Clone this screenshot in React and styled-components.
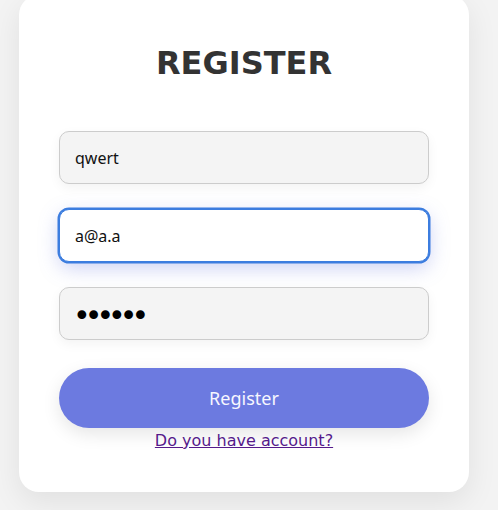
import React, { useEffect, useRef } from "react";
import styled, { createGlobalStyle, css } from "styled-components";

const Global = createGlobalStyle`
  html, body {
    margin: 0;
    padding: 0;
    background: #f3f3f3;
    font-family: "DejaVu Sans", sans-serif;
    overflow: hidden;
  }
  * { box-sizing: border-box; }
`;

const Page = styled.div`
  width: 498px;
  height: 510px;
  display: flex;
  align-items: flex-start;
  padding-left: 19px;
`;

const Card = styled.form`
  width: 450px;
  margin-top: -5px;
  background: #ffffff;
  border-radius: 20px;
  box-shadow: 0 10px 30px rgba(0, 0, 0, 0.08);
  padding: 49px 40px 42px;
  display: flex;
  flex-direction: column;
  align-items: stretch;
`;

const Title = styled.h2`
  margin: 0 0 49px;
  font-family: "DejaVu Sans", sans-serif;
  font-size: 32px;
  font-weight: bold;
  color: #333333;
  text-align: center;
  line-height: normal;
`;

const Fields = styled.div`
  display: flex;
  flex-direction: column;
  gap: 25px;
`;

const Input = styled.input`
  width: 100%;
  height: 53px;
  padding: 0 15px;
  font-family: "Noto Sans", sans-serif;
  font-size: 16px;
  color: #111;
  background: #f4f4f4;
  border: 1px solid #cccccc;
  border-radius: 10px;
  box-shadow: 0 4px 12px rgba(0, 0, 0, 0.05);
  outline: none;
  caret-color: #000;

  &[type="password"] {
    font-family: "DejaVu Sans", sans-serif;
    font-size: 30px;
    letter-spacing: -6px;
    padding: 3px 0 0 13px;
    color: #000;
  }

  ${(p) =>
    p.$active &&
    css`
      background: #ffffff;
      border: 1px solid #3c7ddf;
      box-shadow: 0 0 0 1.5px #3c7ddf, 0 6px 20px rgba(108, 122, 224, 0.35);
    `}
`;

const Button = styled.button`
  margin-top: 28px;
  height: 60px;
  width: 100%;
  border: none;
  border-radius: 30px;
  background: #6c7ae0;
  color: #f7f7ff;
  font-family: "Noto Sans", sans-serif;
  font-size: 18px;
  box-shadow: 0 6px 18px rgba(0, 0, 0, 0.1);
  cursor: pointer;
`;

const LinkRow = styled.p`
  margin: 3px 0 0;
  text-align: center;
  font-family: "DejaVu Sans", sans-serif;
  font-size: 16px;
  line-height: normal;
`;

const Link = styled.a`
  color: #551a8b;
  text-decoration: underline;
`;

export default function App() {
  const emailRef = useRef(null);

  useEffect(() => {
    const el = emailRef.current;
    if (el) {
      try {
        el.focus();
        const n = el.value.length;
        el.setSelectionRange(n, n);
      } catch (e) {
        /* ignore */
      }
    }
  }, []);

  return (
    <>
      <Global />
      <Page>
        <Card onSubmit={(e) => e.preventDefault()}>
          <Title>REGISTER</Title>
          <Fields>
            <Input type="text" defaultValue="qwert" />
            <Input ref={emailRef} type="text" inputMode="email" defaultValue="a@a.a" $active />
            <Input type="password" defaultValue="123456" />
          </Fields>
          <Button type="submit">Register</Button>
          <LinkRow>
            <Link href="#">Do you have account?</Link>
          </LinkRow>
        </Card>
      </Page>
    </>
  );
}
